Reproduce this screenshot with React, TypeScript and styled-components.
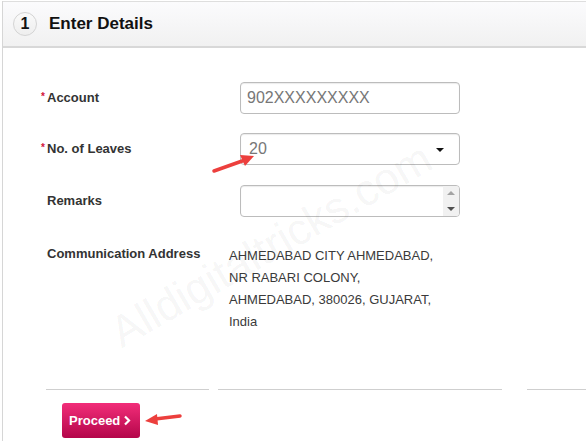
import React from "react";
import styled, { createGlobalStyle } from "styled-components";

const GlobalStyle = createGlobalStyle`
  html, body {
    margin: 0;
    padding: 0;
    background: #fff;
    font-family: "Liberation Sans", Arial, sans-serif;
  }
`;

const Page = styled.div`
  position: relative;
  width: 584px;
  height: 440px;
  margin: 1px 0 0 2px;
  border-left: 1px solid #d6d6d6;
  overflow: hidden;
`;

const Header = styled.div`
  display: flex;
  align-items: center;
  height: 44px;
  padding-left: 10px;
  border-top: 1px solid #dedede;
  border-bottom: 2px solid #d8d8d8;
  background: linear-gradient(#fbfbfd, #f1f1f1);
`;

const StepCircle = styled.div`
  width: 22px;
  height: 22px;
  border: 1px solid #d4d4d4;
  border-radius: 50%;
  background: linear-gradient(#fafafa, #eeeeee);
  display: flex;
  align-items: center;
  justify-content: center;
  font-size: 16px;
  font-weight: bold;
  color: #111;
`;

const Title = styled.h2`
  margin: 0 0 0 12px;
  font-size: 17px;
  font-weight: bold;
  color: #111;
`;

const Form = styled.div`
  padding: 34px 0 0 38px;
`;

const Row = styled.div<{ $top?: boolean; $gap?: number }>`
  display: grid;
  grid-template-columns: 188px 1fr;
  align-items: ${(p) => (p.$top ? "start" : "center")};
  margin-bottom: ${(p) => p.$gap ?? 19}px;
`;

const Label = styled.div`
  padding-left: 6px;
  font-size: 13px;
  line-height: 20px;
  font-weight: bold;
  color: #333;
`;

const Star = styled.span`
  display: inline-block;
  width: 6px;
  margin-left: -6px;
  font-size: 10px;
  vertical-align: top;
  line-height: 17px;
  color: #d2143a;
`;

const Field = styled.div<{ $pad?: number }>`
  position: relative;
  box-sizing: border-box;
  width: 220px;
  height: 32px;
  margin-left: 11px;
  border: 1px solid #bcbcbc;
  border-radius: 4px;
  box-shadow: inset 0 1px 1px rgba(0, 0, 0, 0.08);
  display: flex;
  align-items: center;
  padding-left: ${(p) => p.$pad ?? 6}px;
  font-size: 16px;
  color: #777;
  background: #fff;
`;

const Caret = styled.span`
  position: absolute;
  right: 15px;
  top: 14px;
  border-left: 4px solid transparent;
  border-right: 4px solid transparent;
  border-top: 4px solid #111;
`;

const ScrollTrack = styled.div`
  position: absolute;
  top: 0;
  right: 0;
  bottom: 0;
  width: 16px;
  background: #f1f1f1;
  border-radius: 0 3px 3px 0;
  display: flex;
  flex-direction: column;
  justify-content: space-between;
  align-items: center;
  padding: 5px 0;
  box-sizing: border-box;
`;

const ScrollArrow = styled.span<{ $down?: boolean }>`
  border-left: 4px solid transparent;
  border-right: 4px solid transparent;
  ${(p) =>
    p.$down
      ? "border-top: 4px solid #505050;"
      : "border-bottom: 4px solid #a3a3a3;"}
`;

const Address = styled.div`
  font-size: 13px;
  line-height: 22px;
  color: #3a3a3a;
  margin-top: 1px;
`;

const Footer = styled.div`
  padding: 56px 0 0 43px;
`;

const Dividers = styled.div`
  display: flex;
`;

const Divider = styled.div<{ $w: number; $gap: number }>`
  flex: none;
  width: ${(p) => p.$w}px;
  margin-right: ${(p) => p.$gap}px;
  height: 1px;
  background: #cfcfcf;
`;

const ProceedButton = styled.button`
  display: flex;
  align-items: center;
  gap: 3px;
  margin: 13px 0 0 16px;
  width: 78px;
  height: 35px;
  padding: 0 0 0 7px;
  border: none;
  border-radius: 3px;
  background: linear-gradient(#f22d79, #b4064a);
  color: #fff;
  font-family: "Liberation Sans", Arial, sans-serif;
  font-size: 13px;
  font-weight: bold;
  cursor: pointer;
`;

const Watermark = styled.div`
  position: absolute;
  left: 268px;
  top: 244px;
  transform: translate(-50%, -50%) rotate(-30deg);
  font-size: 44px;
  color: rgba(0, 0, 0, 0.055);
  white-space: nowrap;
  pointer-events: none;
`;

const Annotations = styled.svg`
  position: absolute;
  left: -3px;
  top: -1px;
  pointer-events: none;
`;

export default function App() {
  return (
    <>
      <GlobalStyle />
      <Page>
        <Header>
          <StepCircle>1</StepCircle>
          <Title>Enter Details</Title>
        </Header>
        <Form>
          <Row>
            <Label>
              <Star>*</Star>Account
            </Label>
            <Field>902XXXXXXXXX</Field>
          </Row>
          <Row $gap={20}>
            <Label>
              <Star>*</Star>No. of Leaves
            </Label>
            <Field $pad={8}>
              20
              <Caret />
            </Field>
          </Row>
          <Row $gap={27}>
            <Label>Remarks</Label>
            <Field>
              <ScrollTrack>
                <ScrollArrow />
                <ScrollArrow $down />
              </ScrollTrack>
            </Field>
          </Row>
          <Row $top $gap={0}>
            <Label>Communication Address</Label>
            <Address>
              AHMEDABAD CITY AHMEDABAD,
              <br />
              NR RABARI COLONY,
              <br />
              AHMEDABAD, 380026, GUJARAT,
              <br />
              India
            </Address>
          </Row>
        </Form>
        <Footer>
          <Dividers>
            <Divider $w={163} $gap={9} />
            <Divider $w={284} $gap={25} />
            <Divider $w={80} $gap={0} />
          </Dividers>
          <ProceedButton>
            Proceed
            <svg width="8" height="11" viewBox="0 0 8 11">
              <polyline
                points="2,1.5 6,5.5 2,9.5"
                fill="none"
                stroke="#fff"
                strokeWidth="2.2"
              />
            </svg>
          </ProceedButton>
        </Footer>
        <Watermark>Alldigitaltricks.com</Watermark>
        <Annotations width="586" height="441" viewBox="0 0 586 441">
          <line x1="214" y1="171" x2="245" y2="160" stroke="#ec3f3d" strokeWidth="3.5" strokeLinecap="round" />
          <polygon points="254,156 240,155 245,166" fill="#ec3f3d" />
          <line x1="180" y1="416" x2="155" y2="419" stroke="#ec3f3d" strokeWidth="3.5" strokeLinecap="round" />
          <polygon points="145,421 157,414 158,425" fill="#ec3f3d" />
        </Annotations>
      </Page>
    </>
  );
}
